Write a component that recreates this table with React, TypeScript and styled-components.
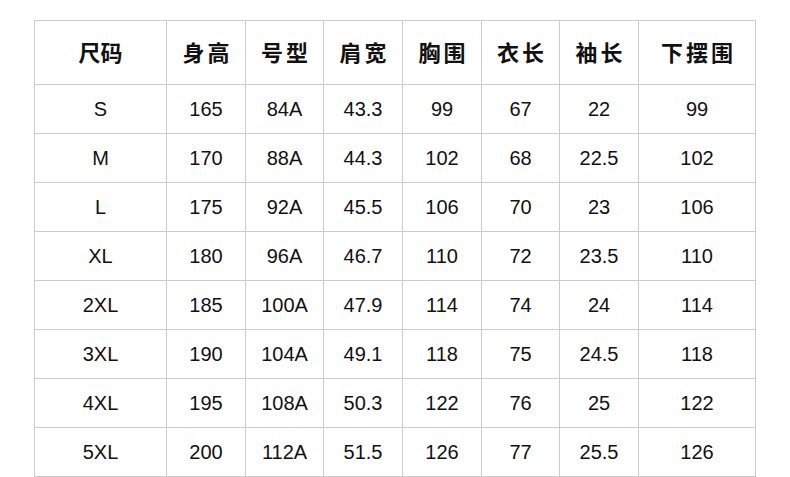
import React from 'react'
import styled, { createGlobalStyle } from 'styled-components'

const GlobalStyle = createGlobalStyle`
  html, body {
    margin: 0;
    padding: 0;
    background: #fff;
  }
  body {
    font-family: "Liberation Sans", "Noto Sans CJK SC", sans-serif;
    color: #111;
  }
`;

const Page = styled.div`
  width: 790px;
  height: 477px;
  box-sizing: border-box;
  padding: 20px 0 0 34px;
  overflow: hidden;
`;

const Grid = styled.div`
  display: grid;
  grid-template-columns: 132px 79px 78px 79px 79px 78px 79px 117px;
  grid-template-rows: 64px;
  grid-auto-rows: 49px;
  width: max-content;
  border-top: 1px solid #cccccc;
  border-left: 1px solid #cccccc;
`;

const Cell = styled.div<{ $head?: boolean; $tight?: boolean }>`
  box-sizing: border-box;
  border-right: 1px solid #cccccc;
  border-bottom: 1px solid #cccccc;
  display: flex;
  align-items: center;
  justify-content: center;
  white-space: nowrap;
  font-family: ${(p) =>
    p.$head ? '"Noto Sans CJK SC", sans-serif' : '"Liberation Sans", sans-serif'};
  font-size: ${(p) => (p.$head ? '22px' : '20px')};
  font-weight: ${(p) => (p.$head ? 700 : 400)};
  letter-spacing: ${(p) => (p.$head && !p.$tight ? '3px' : '0')};
  padding-left: ${(p) => (p.$head && !p.$tight ? '3px' : '0')};
  padding-bottom: ${(p) => (p.$head ? '4px' : '0')};
  color: #111;
`;

const headers = ['尺码', '身高', '号型', '肩宽', '胸围', '衣长', '袖长', '下摆围']

const rows = [
  ['S', '165', '84A', '43.3', '99', '67', '22', '99'],
  ['M', '170', '88A', '44.3', '102', '68', '22.5', '102'],
  ['L', '175', '92A', '45.5', '106', '70', '23', '106'],
  ['XL', '180', '96A', '46.7', '110', '72', '23.5', '110'],
  ['2XL', '185', '100A', '47.9', '114', '74', '24', '114'],
  ['3XL', '190', '104A', '49.1', '118', '75', '24.5', '118'],
  ['4XL', '195', '108A', '50.3', '122', '76', '25', '122'],
  ['5XL', '200', '112A', '51.5', '126', '77', '25.5', '126'],
]

const App = () => {
  return (
    <Page>
      <GlobalStyle />
      <Grid>
        {headers.map((h, i) => (
          <Cell key={h} $head $tight={i === 0}>
            {h}
          </Cell>
        ))}
        {rows.map((row) =>
          row.map((v, i) => <Cell key={row[0] + i}>{v}</Cell>)
        )}
      </Grid>
    </Page>
  )
}

export default App
